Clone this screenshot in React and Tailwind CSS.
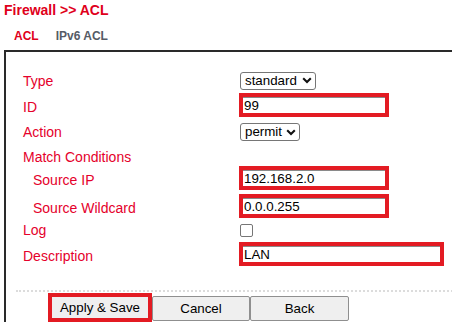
import React from 'react';

function FakeSelect({ value, width }) {
  return (
    <div
      className={`flex h-[18px] items-center justify-between rounded-[3px] border border-[#767676] bg-white pl-[4px] pr-[3px] text-[13.33px] leading-none text-black ${width}`}
    >
      <span>{value}</span>
      <svg width="10" height="7" viewBox="0 0 10 7" className="ml-[2px]">
        <path d="M1.2 1.3 L5 5 L8.8 1.3" fill="none" stroke="#111" strokeWidth="2.1" />
      </svg>
    </div>
  );
}

function MarkedInput({ value, width }) {
  return (
    <div className={`-ml-[1px] h-[24px] border-4 border-[#e31b23] ${width}`}>
      <div className="h-full border-t border-[#8a8a8a] bg-white pl-[1px] text-[13.33px] leading-[15px] text-black">
        {value}
      </div>
    </div>
  );
}

function Row({ label, height, indent, children, shift, className = '' }) {
  return (
    <div className={`flex items-center ${height} ${className}`}>
      <div className={`w-[217px] shrink-0 text-[14px] leading-4 text-[#e5002b] ${indent ? 'pl-[10px]' : ''} ${shift ? 'pt-[4px]' : ''}`}>
        {label}
      </div>
      {children}
    </div>
  );
}

export default function App() {
  return (
    <div className="h-[332px] w-[452px] overflow-hidden bg-white font-['Liberation_Sans',Arial,sans-serif]">
      <div className="pl-[4px] pt-[2px] text-[14px] font-bold leading-4 text-[#e0001b]">
        Firewall &gt;&gt; ACL
      </div>

      {/* Tabs */}
      <div className="mt-[11px] flex gap-[17px] pl-[14px] text-[12px] font-bold leading-[14px]">
        <span className="text-[#e0001b]">ACL</span>
        <span className="text-[#555b66]">IPv6 ACL</span>
      </div>

      {/* Form box */}
      <div className="ml-[4px] mt-[7px] w-[480px] border-l-2 border-t-2 border-[#2a2a2a] pl-[17px] pt-[16px]">
        <Row label="Type" height="h-[25px]">
          <FakeSelect value="standard" width="w-[76px]" />
        </Row>
        <Row label="ID" height="h-[24px]" shift>
          <MarkedInput value="99" width="w-[150px]" />
        </Row>
        <Row label="Action" height="h-[30px]">
          <FakeSelect value="permit" width="w-[60px]" />
        </Row>
        <Row label="Match Conditions" height="h-[19px]" />
        <Row label="Source IP" height="h-[24px]" indent shift>
          <MarkedInput value="192.168.2.0" width="w-[150px]" />
        </Row>
        <Row label="Source Wildcard" height="h-[24px]" indent shift className="mt-[4px]">
          <MarkedInput value="0.0.0.255" width="w-[150px]" />
        </Row>
        <Row label="Log" height="h-[24px]">
          <div className="h-[13px] w-[13px] rounded-[2px] border border-[#767676] bg-white" />
        </Row>
        <Row label="Description" height="h-[24px]" shift>
          <MarkedInput value="LAN" width="w-[205px]" />
        </Row>

        <div className="-ml-[7px] mt-[24px] border-t-2 border-dotted border-[#dcdcdc]" />

        {/* Buttons */}
        <div className="ml-[25px] mt-[1px] flex items-start text-[13.33px] text-black">
          <div className="h-[29px] w-[104px] border-4 border-[#e31b23]">
            <div className="flex h-full items-center justify-center bg-[#efefef] leading-none">
              Apply &amp; Save
            </div>
          </div>
          <div className="mt-[3px] flex h-[25px] w-[98px] items-center justify-center rounded-[2px] border border-[#8f8f8f] bg-[#efefef] leading-none">
            Cancel
          </div>
          <div className="mt-[3px] flex h-[25px] w-[99px] items-center justify-center rounded-[2px] border border-[#8f8f8f] bg-[#efefef] leading-none">
            Back
          </div>
        </div>
      </div>
    </div>
  );
}
